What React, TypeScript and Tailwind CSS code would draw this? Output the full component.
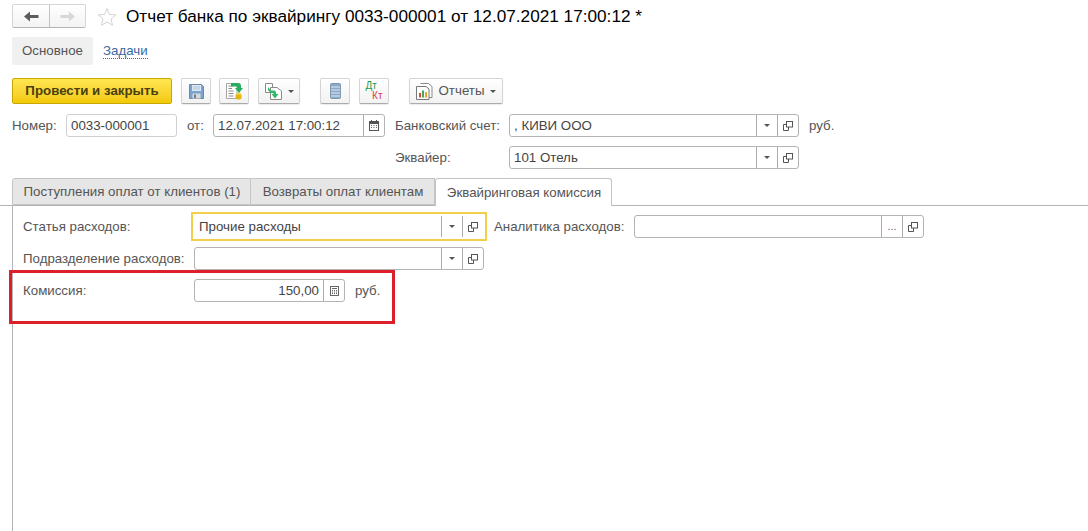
const CopyIcon = () => (
  <svg width="10" height="10" viewBox="0 0 10 10" fill="none" stroke="#555" strokeWidth="1">
    <rect x="3.5" y="0.5" width="6" height="5.5" fill="white" />
    <path d="M3.5 3.5H0.5V9.5H5.5V6" />
  </svg>
);

const Caret = () => (
  <svg width="6" height="3" viewBox="0 0 6 3">
    <path d="M0 0H6L3 3Z" fill="#555" />
  </svg>
);

const SelectBtn = () => (
  <div className="w-[21px] h-full flex items-center justify-center border-l border-[#ababab]">
    <Caret />
  </div>
);

const CopyBtn = () => (
  <div className="w-[21px] h-full flex items-center justify-center border-l border-[#ababab]">
    <CopyIcon />
  </div>
);

const CalendarIcon = () => (
  <svg width="10" height="11" viewBox="0 0 10 11">
    <rect x="0.5" y="1.5" width="9" height="9" fill="#fff" stroke="#555" />
    <rect x="0.5" y="1.5" width="9" height="2.5" fill="#555" />
    <path d="M2.5 0V2M7.5 0V2" stroke="#555" />
    <path d="M2 5.5H3M4.5 5.5H5.5M7 5.5H8M2 7.5H3M4.5 7.5H5.5M7 7.5H8" stroke="#666" />
  </svg>
);

const CalcIcon = () => (
  <svg width="9" height="10" viewBox="0 0 9 10">
    <rect x="0.5" y="0.5" width="8" height="9" fill="#fff" stroke="#666" />
    <rect x="2" y="2" width="5" height="1" fill="#666" />
    <path d="M2 4.5H3M4 4.5H5M6 4.5H7M2 6H3M4 6H5M6 6H7M2 7.5H3M4 7.5H5M6 7.5H7" stroke="#666" />
  </svg>
);

const Field = ({ className, children }: { className: string; children?: React.ReactNode }) => (
  <div className={`h-[23px] flex items-center border border-[#b3b3b3] rounded-[3px] bg-white text-[#444] ${className}`}>
    {children}
  </div>
);

const ToolBtn = ({ className, children }: { className: string; children: React.ReactNode }) => (
  <div className={`h-[26px] flex items-center justify-center gap-[6px] rounded-[2px] border border-[#d4d4d4] border-b-[#ababab] bg-gradient-to-b from-white to-[#f2f2f2] shadow-[0_1px_1px_rgba(0,0,0,0.08)] ${className}`}>
    {children}
  </div>
);

const App = () => {
  return (
    <div className="relative w-[1088px] h-[531px] bg-white overflow-hidden font-['Liberation_Sans',Arial,sans-serif] text-[13.3px] text-[#555] flex flex-col">
      {/* Title */}
      <div className="h-[37px] flex items-start pt-1 pl-3">
        <div className="flex w-[74px] h-[24px] rounded-[2px] border border-[#d6d6d6] border-b-[#b5b5b5] bg-gradient-to-b from-white to-[#f3f3f3]">
          <div className="w-[37px] flex items-center justify-center border-r border-[#c4c4c4]">
            <svg width="15" height="11" viewBox="0 0 15 11"><path d="M0 5.5L6 0.5V4H14.5V7H6V10.5Z" fill="#5c5c5c" /></svg>
          </div>
          <div className="flex-1 flex items-center justify-center">
            <svg width="15" height="11" viewBox="0 0 15 11"><path d="M15 5.5L9 0.5V4H0.5V7H9V10.5Z" fill="#d8d8d8" /></svg>
          </div>
        </div>
        <svg className="ml-[11px] mt-[3px]" width="20" height="20" viewBox="0 0 20 20">
          <path d="M10 1.5L12.4 7.4L18.8 7.9L14 12L15.5 18.3L10 15L4.5 18.3L6 12L1.2 7.9L7.6 7.4Z" fill="white" stroke="#d4d4d4" />
        </svg>
        <div className="ml-[9px] text-[17.2px] leading-[24px] text-black whitespace-nowrap">Отчет банка по эквайрингу 0033-000001 от 12.07.2021 17:00:12 *</div>
      </div>

      {/* Sections */}
      <div className="h-[28px] flex items-center pl-3">
        <div className="w-[81px] h-full rounded-[2px] bg-[#f0f0f0] flex items-center justify-center">Основное</div>
        <div className="ml-[10px] text-[#3a6a9f] leading-[15px] border-b border-dotted border-[#3a6a9f]">Задачи</div>
      </div>

      {/* Toolbar */}
      <div className="mt-[13px] h-[26px] flex pl-3">
        <div className="w-[160px] h-[26px] flex items-center justify-center rounded-[2px] border border-[#c8a800] bg-gradient-to-b from-[#ffe650] to-[#f3c900] font-bold text-[#4a3f10]">Провести и закрыть</div>
        <ToolBtn className="w-[30px] ml-[9px]">
          <svg width="15" height="15" viewBox="0 0 15 15">
            <path d="M0.5 0.5H12.5L14.5 2.5V14.5H0.5Z" fill="#7ba3cf" stroke="#6f86a5" />
            <rect x="3" y="1" width="9" height="6" fill="#dfe9f4" />
            <path d="M4 3H11M4 5H11" stroke="#a9c3de" />
            <rect x="3.5" y="9.5" width="8" height="5" fill="#d9d9d9" />
            <rect x="5" y="10.5" width="2" height="3.5" fill="#6f7f95" />
          </svg>
        </ToolBtn>
        <ToolBtn className="w-[30px] ml-[8px]">
          <svg width="17" height="18" viewBox="0 0 17 18">
            <path d="M0.5 1.5H11V16.5H0.5Z" fill="#fff" stroke="#a5a5a5" />
            <path d="M2.5 4H7M2.5 6.5H6M2.5 9H7.5M2.5 11.5H7.5M2.5 14H7.5" stroke="#8a8a8a" />
            <path d="M5 1H12C14 1 15 2 15 4V6H17L13 11L9 6H11V4.5H5Z" fill="#27ae60" />
            <ellipse cx="12.5" cy="12.5" rx="3" ry="1.4" fill="#f2cc3b" />
            <path d="M9.5 13V16.2C9.5 17 10.8 17.6 12.5 17.6S15.5 17 15.5 16.2V13Z" fill="#e3b414" />
          </svg>
        </ToolBtn>
        <ToolBtn className="w-[42px] ml-[9px]">
          <svg width="17" height="17" viewBox="0 0 17 17">
            <path d="M0.5 0.5H7.5V9.5H0.5Z" fill="#fff" stroke="#8a8a8a" />
            <path d="M5.5 4.5H12L16.5 8V16.5H5.5Z" fill="#fff" stroke="#8a8a8a" />
            <path d="M3 4L6 7.5H8.5C10.5 7.5 11 8.5 11 10V11H13.5L10 15.5L6.5 11H8.5V10H5.5L3 7Z" fill="#2eb866" />
          </svg>
          <Caret />
        </ToolBtn>
        <ToolBtn className="w-[30px] ml-[20px]">
          <svg width="11" height="16" viewBox="0 0 11 16">
            <rect x="0.5" y="0.5" width="10" height="15" rx="1" fill="#8aa9c4" stroke="#7e98b0" />
            <path d="M1 4H10M1 7H10M1 10H10M1 13H10" stroke="#e2ebf2" />
          </svg>
        </ToolBtn>
        <ToolBtn className="w-[30px] ml-[9px]">
          <div className="w-[17px] h-[20px] flex flex-col text-[10px] leading-[10px]">
            <span className="text-[#1f9a4c] whitespace-nowrap">Дт</span>
            <span className="text-[#d5404a] self-end whitespace-nowrap">Кт</span>
          </div>
        </ToolBtn>
        <ToolBtn className="w-[94px] ml-[20px]">
          <svg width="17" height="17" viewBox="0 0 17 17">
            <path d="M4.5 0.5H12.5L16 3.5V14.5H13" fill="#fff" stroke="#8a8a8a" />
            <path d="M0.5 3.5H10L13 6V16.5H0.5Z" fill="#fff" stroke="#777" />
            <rect x="3" y="10" width="2" height="4.5" fill="#d9463c" />
            <rect x="6" y="7.5" width="2" height="7" fill="#48a84a" />
            <rect x="9" y="9" width="2" height="5.5" fill="#e2a92a" />
          </svg>
          <span>Отчеты</span>
          <Caret />
        </ToolBtn>
      </div>

      {/* Header fields */}
      <div className="mt-[10px] h-[23px] flex items-center pl-3">
        <span className="w-[54px]">Номер:</span>
        <Field className="w-[111px] pl-[4px] border-[#d0d0d0]">0033-000001</Field>
        <span className="ml-[10px] w-[26px]">от:</span>
        <Field className="w-[172px] pl-[4px] border-[#a0a0a0]">
          <span className="flex-1">12.07.2021 17:00:12</span>
          <div className="w-[21px] h-full flex items-center justify-center border-l border-[#ababab]"><CalendarIcon /></div>
        </Field>
        <span className="ml-[10px] w-[114px]">Банковский счет:</span>
        <Field className="w-[290px] pl-[4px]">
          <span className="flex-1">, КИВИ ООО</span>
          <SelectBtn />
          <CopyBtn />
        </Field>
        <span className="ml-[10px]">руб.</span>
      </div>
      <div className="mt-[9px] h-[23px] flex items-center pl-[395px]">
        <span className="w-[114px]">Эквайер:</span>
        <Field className="w-[290px] pl-[4px]">
          <span className="flex-1">101 Отель</span>
          <SelectBtn />
          <CopyBtn />
        </Field>
      </div>

      {/* Tabs */}
      <div className="mt-[9px] h-[28px] flex pl-3 border-b border-[#b5b5b5]">
        <div className="w-[239px] pl-px flex items-center justify-center bg-[#e6e6e6] border border-[#c4c4c4] rounded-tl-[3px]">Поступления оплат от клиентов (1)</div>
        <div className="w-[184px] pl-px flex items-center justify-center bg-[#e6e6e6] border-y border-r border-[#c4c4c4]">Возвраты оплат клиентам</div>
        <div className="w-[177px] h-[28px] pl-px flex items-center justify-center bg-white border-x border-t border-[#c4c4c4] rounded-t-[3px]">Эквайринговая комиссия</div>
      </div>

      {/* Tab content */}
      <div className="ml-3 flex-1 border-l border-[#b5b5b5] flex flex-col pt-[6px]">
        <div className="h-[29px] flex items-center pl-[10px]">
          <span className="w-[168px]">Статья расходов:</span>
          <div className="w-[296px] h-[29px] flex items-center border-2 border-[#f2cf4a] pl-[6px] pr-[2px] py-[2px] text-[#444]">
            <span className="flex-1">Прочие расходы</span>
            <SelectBtn />
            <CopyBtn />
          </div>
          <span className="ml-[7px] w-[140px]">Аналитика расходов:</span>
          <Field className="w-[290px] pl-[5px]">
            <span className="flex-1"></span>
            <div className="w-[21px] h-full flex items-center justify-center border-l border-[#ababab] text-[11px] text-[#666]">...</div>
            <CopyBtn />
          </Field>
        </div>
        <div className="mt-[6px] h-[23px] flex items-center pl-[10px]">
          <span className="w-[171px] whitespace-nowrap">Подразделение расходов:</span>
          <Field className="w-[290px] pl-[5px]">
            <span className="flex-1"></span>
            <SelectBtn />
            <CopyBtn />
          </Field>
        </div>
        <div className="mt-[9px] h-[23px] flex items-center pl-[10px]">
          <span className="w-[171px]">Комиссия:</span>
          <Field className="w-[151px]">
            <span className="flex-1 text-right pr-[4px]">150,00</span>
            <div className="w-[21px] h-full flex items-center justify-center border-l border-[#ababab]"><CalcIcon /></div>
          </Field>
          <span className="ml-[10px]">руб.</span>
        </div>
      </div>

      {/* Red annotation frame */}
      <div className="absolute left-[9px] top-[270px] w-[386px] h-[54px] border-[3px] border-[#dc1f2b]" />
    </div>
  );
};

export default App;
